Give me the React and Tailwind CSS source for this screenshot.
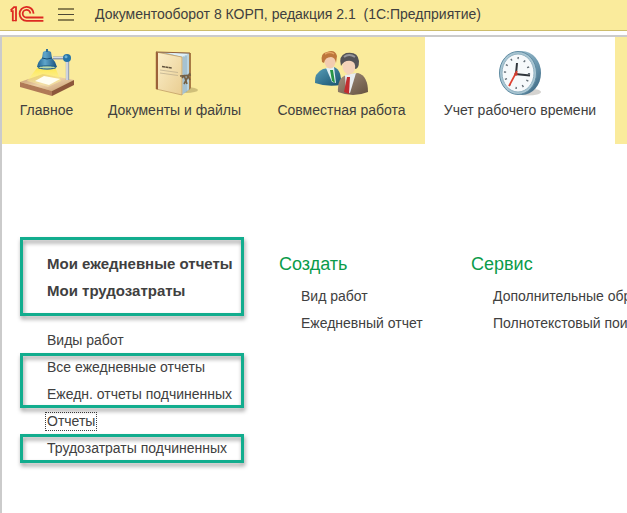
// App.jsx
// ─────────────────────────────────────────────────────────────────────────────
// 1C document management shell: title bar, section tabs and the function menu
// of the time tracking section.
// ─────────────────────────────────────────────────────────────────────────────

function Logo() {
  return (
    <svg width="34" height="18" viewBox="0 0 34 18" fill="none" stroke="#dd2a22" strokeWidth="1.8">
      <path d="M0.600 6.200 H2.800 V16.200 M0.600 5.400 L4 2.200 H6 V16.200" />
      <path d="M2.800 15.600 H6" strokeWidth="1.200" />
      <path d="M23.600 8.600 A7 7 0 1 0 16.600 15.800 H33.400" />
      <path d="M20.300 8.600 A3.800 3.800 0 1 0 16.600 12.500 H33.400" />
    </svg>
  );
}

function LampIcon() {
  return (
    <svg width="56" height="48" viewBox="0 0 56 48">
      <defs>
        <linearGradient id="beam" x1="0" y1="0" x2="0" y2="1">
          <stop offset="0" stopColor="#ffe63a" />
          <stop offset="1" stopColor="#fff9b8" stopOpacity="0.4" />
        </linearGradient>
        <linearGradient id="shade" x1="0" y1="0" x2="1" y2="0">
          <stop offset="0" stopColor="#1d5f8e" />
          <stop offset="0.4" stopColor="#5fa6cb" />
          <stop offset="1" stopColor="#174f7c" />
        </linearGradient>
        <linearGradient id="desk" x1="0" y1="0" x2="1" y2="1">
          <stop offset="0" stopColor="#b98a60" />
          <stop offset="0.5" stopColor="#ecd0a8" />
          <stop offset="1" stopColor="#c0946b" />
        </linearGradient>
      </defs>
      <path d="M1 33 L24 25 L55 31 L33 42 Z" fill="url(#desk)" />
      <path d="M1 33 L33 42 V47 L1 38 Z" fill="#b07a57" />
      <path d="M33 42 L55 31 V36 L33 47 Z" fill="#8d573b" />
      <path d="M18 19 L36 18 L42 32 L29 38 L8 32 Z" fill="url(#beam)" opacity="0.85" />
      <path d="M16 32 L25 27 L41 30 L30 36 Z" fill="#fffef2" />
      <path d="M34 9 H47" stroke="#8e9aae" strokeWidth="3" />
      <path d="M34 8.400 H46" stroke="#dce2ec" strokeWidth="1" />
      <path d="M48.500 11 V31" stroke="#9ba5b8" strokeWidth="3.400" />
      <path d="M48 12 V31" stroke="#e4e7ef" strokeWidth="1.400" />
      <circle cx="48" cy="9" r="4" fill="#2674a7" />
      <circle cx="47" cy="7.800" r="1.500" fill="#6db1d5" />
      <path d="M24 3 Q28 0 32 3 L33 9 Q37 13 38 18 Q28 23 18 18 Q19 12 23 9 Z" fill="url(#shade)" />
      <ellipse cx="28" cy="18.400" rx="9" ry="1.600" fill="#b9d8a8" stroke="#1d5c88" strokeWidth="1" />
      <path d="M23 9 Q28 11 33 9" stroke="#154d75" fill="none" />
      <path d="M28 0 V3" stroke="#2d6e98" strokeWidth="2" />
    </svg>
  );
}

function BookIcon() {
  return (
    <svg width="46" height="48" viewBox="0 0 46 48">
      <defs>
        <linearGradient id="cover" x1="0" y1="0" x2="1" y2="1">
          <stop offset="0" stopColor="#fcf0cb" />
          <stop offset="1" stopColor="#e9cd91" />
        </linearGradient>
      </defs>
      <ellipse cx="34" cy="41" rx="12" ry="3" fill="#9c8950" opacity="0.45" />
      <path d="M6 3 L38 4 L38 40 L30 46 Z" fill="#a1b9c5" />
      <path d="M11 3 L37 5 L30 8 Z" fill="#dff0f8" />
      <path d="M30 8 L37 5 V40 L30 46 Z" fill="#b9d4e1" />
      <path d="M32 8 V44 M34 7 V43" stroke="#7898a9" strokeWidth="0.6" />
      <path d="M37 4 L39 4 V39 L37 41 Z" fill="#a87b45" />
      <path d="M4 3 L30 8 V46 L4 40 Z" fill="url(#cover)" stroke="#c19e66" strokeWidth="0.8" />
      <path d="M4 3 L6 3.500 V40.500 L4 40 Z" fill="#9c6139" />
      <path d="M4 3 L38 4" stroke="#916039" />
      <path d="M10 17.500 L20 19" stroke="#63543f" strokeWidth="1.600" strokeDasharray="3 0.400" />
      <path d="M8 21 L26 23.500 M8 24 L26 26.500" stroke="#b8a98b" strokeWidth="0.700" />
      <path d="M28 27 L39 26 M32 26 L35 35 M38 24 L32 35 M30 29 Q35 23 38 31" stroke="#756044" strokeWidth="1.600" fill="none" />
    </svg>
  );
}

function PeopleIcon() {
  return (
    <svg width="56" height="48" viewBox="0 0 56 48">
      <defs>
        <linearGradient id="blueSuit" x1="0" y1="0" x2="1" y2="1">
          <stop offset="0" stopColor="#5aa2bc" />
          <stop offset="1" stopColor="#174f6c" />
        </linearGradient>
        <linearGradient id="brownSuit" x1="0" y1="0" x2="1" y2="1">
          <stop offset="0" stopColor="#a69281" />
          <stop offset="1" stopColor="#65513f" />
        </linearGradient>
      </defs>
      <path d="M1 34 Q0 24 9 20 L20 18 Q28 21 27 36 Q12 38 1 34 Z" fill="url(#blueSuit)" />
      <path d="M12 19 L20 18 L22 34 L18 33 Z" fill="#e2f1f4" />
      <path d="M16 21 L19 21 L21 34 L18 32 Z" fill="#279546" />
      <ellipse cx="16" cy="12" rx="5.500" ry="7.500" fill="#f2ccb0" />
      <path d="M8 13 Q6 4 13 3 Q21 0 23 7 L22 14 Q21 8 17 8 Q11 8 10 14 Z" fill="#bd763c" />
      <path d="M11 5 Q16 2 20 5" stroke="#e4a565" strokeWidth="1.500" fill="none" />
      <path d="M24 43 Q23 29 32 26 L44 24 Q54 27 54 43 Q39 49 24 43 Z" fill="url(#brownSuit)" />
      <path d="M31 26 L42 24 L36 44 L32 43 Z" fill="#e8edf1" />
      <path d="M33 28 L36 28 L35 45 L30 43 Z" fill="#c22c2f" />
      <ellipse cx="35" cy="17" rx="6.500" ry="8.500" fill="#f4d3ba" />
      <path d="M27 17 Q24 7 32 4 Q44 2 45 12 Q45 20 41 20 Q42 13 37 12 Q30 11 27 17 Z" fill="#555457" />
      <path d="M30 8 Q35 4 41 8" stroke="#96969a" strokeWidth="2" fill="none" />
    </svg>
  );
}

function ClockIcon() {
  return (
    <svg width="46" height="48" viewBox="0 0 46 48">
      <defs>
        <linearGradient id="rim" x1="0" y1="0" x2="1" y2="1">
          <stop offset="0" stopColor="#b8d3df" />
          <stop offset="0.6" stopColor="#6b97ae" />
          <stop offset="1" stopColor="#345d78" />
        </linearGradient>
      </defs>
      <ellipse cx="31" cy="43" rx="13" ry="3.500" fill="#b9b5b0" opacity="0.600" />
      <ellipse cx="25" cy="24" rx="19" ry="22" fill="url(#rim)" />
      <ellipse cx="21" cy="24" rx="18.500" ry="21.500" fill="#a9c6d3" stroke="#5f8ba2" />
      <ellipse cx="21" cy="24" rx="16" ry="19" fill="#f6f9fb" stroke="#8fb0c0" />
      <ellipse cx="20" cy="24" rx="12" ry="15" fill="none" stroke="#636d76" strokeWidth="2.200" strokeDasharray="1.400 5.700" />
      <path d="M19 25 L20 14" stroke="#30363c" strokeWidth="2" />
      <path d="M18 25 L33 26.500" stroke="#30363c" strokeWidth="2" />
      <path d="M20 22 L12 37" stroke="#e13e2e" strokeWidth="1.600" />
      <circle cx="19" cy="25" r="1.800" fill="#c93d32" />
    </svg>
  );
}

const TABS = [
  { title: "Главное", icon: LampIcon, width: "w-[89px]" },
  { title: "Документы и файлы", icon: BookIcon, width: "w-[167px]" },
  { title: "Совместная работа", icon: PeopleIcon, width: "w-[167px]" },
  { title: "Учет рабочего времени", icon: ClockIcon, width: "w-[190px]", active: true },
];

const COMMANDS = [
  { title: "Создать", items: ["Вид работ", "Ежедневный отчет"] },
  { title: "Сервис", items: ["Дополнительные обработки", "Полнотекстовый поиск"] },
];

function TitleBar() {
  return (
    <header className="flex h-[31px] items-center border-b border-[#cdbd6c] bg-[#faeb9c] pb-0.5 pl-2.5">
      <Logo />
      <button aria-label="Меню" className="ml-3.5 flex w-4 flex-col gap-1">
        <span className="h-0.5 bg-[#8c8150]" />
        <span className="h-px bg-[#4d4836]" />
        <span className="h-0.5 bg-[#8c8150]" />
      </button>
      <h1 className="ml-[21px] whitespace-pre text-[14px]">
        {"Документооборот 8 КОРП, редакция 2.1  (1С:Предприятие)"}
      </h1>
    </header>
  );
}

function Tabs() {
  return (
    <nav className="flex overflow-hidden bg-[#faeb9c]">
      {TABS.map(({ title, icon: Icon, width, active }) => (
        <button
          key={title}
          className={`flex h-[107px] shrink-0 flex-col items-center pt-3 ${width} ${active ? "bg-white" : ""}`}
        >
          <Icon />
          <span className="mt-[3px] whitespace-nowrap text-[14px] leading-5">{title}</span>
        </button>
      ))}
    </nav>
  );
}

function MenuLink({ children, className = "" }) {
  return (
    <li className="flex h-[27px] items-center">
      <a href="#" className={`whitespace-nowrap ${className}`}>
        {children}
      </a>
    </li>
  );
}

// Green frame drawn around a group of links
function Marked({ className = "", frame = "inset-0", children }) {
  return (
    <div className={`relative ${className}`}>
      <ul className="pl-[27px]">{children}</ul>
      <div
        className={`pointer-events-none absolute border-3 border-[#12ad8e] drop-shadow-[1px_3px_2px_rgba(0,0,0,0.4)] ${frame}`}
      />
    </div>
  );
}

function ReportLinks() {
  return (
    <div className="w-56 shrink-0">
      <Marked className="pt-3.5 pb-[11px] text-[15px] font-bold">
        <MenuLink>Мои ежедневные отчеты</MenuLink>
        <MenuLink>Мои трудозатраты</MenuLink>
      </Marked>
      <ul className="mt-[11px] pl-[27px]">
        <MenuLink>Виды работ</MenuLink>
      </ul>
      <Marked frame="inset-x-0 -top-px bottom-0">
        <MenuLink>Все ежедневные отчеты</MenuLink>
        <MenuLink>Ежедн. отчеты подчиненных</MenuLink>
      </Marked>
      <ul className="pl-[25px]">
        <MenuLink className="border border-dotted border-[#404040] px-px leading-[17px]">Отчеты</MenuLink>
      </ul>
      <Marked frame="inset-x-0 -inset-y-px">
        <MenuLink>Трудозатраты подчиненных</MenuLink>
      </Marked>
    </div>
  );
}

function CommandGroup({ title, items }) {
  return (
    <section className="w-48 shrink-0 pt-[15px]">
      <h2 className="text-[18px] leading-6 text-[#0a9b4a]">{title}</h2>
      <ul className="mt-[7px] pl-[22px]">
        {items.map((item) => (
          <MenuLink key={item}>{item}</MenuLink>
        ))}
      </ul>
    </section>
  );
}

export default function App() {
  return (
    <div className="flex min-h-screen flex-col bg-white font-['Liberation_Sans',Arial,sans-serif] text-[14px] text-[#404040]">
      <TitleBar />
      <div className="mt-1 flex-1 border-t-2 border-l-2 border-[#cbcbcb]">
        <Tabs />
        <main className="flex overflow-hidden pt-[93px] pb-12 pl-[18px]">
          <ReportLinks />
          <div className="flex pl-[35px]">
            {COMMANDS.map((group) => (
              <CommandGroup key={group.title} {...group} />
            ))}
          </div>
        </main>
      </div>
    </div>
  );
}
